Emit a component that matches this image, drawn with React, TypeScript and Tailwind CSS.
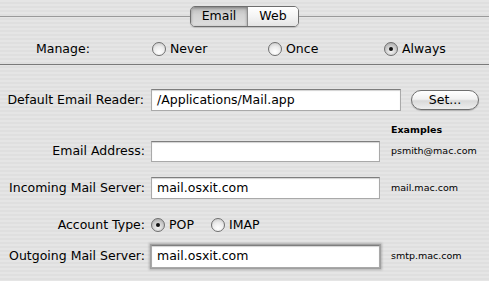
import React from "react";

const font = { fontFamily: '"DejaVu Sans", "Liberation Sans", sans-serif' };

function Radio({ checked }: { checked?: boolean }) {
    return (
        <span
            className={
                "relative inline-block w-[14px] h-[14px] rounded-full border border-[#6f6f6f] shrink-0 " +
                (checked
                    ? "bg-[radial-gradient(circle_at_50%_70%,#f4f4f4_0%,#c9c9c9_55%,#9d9d9d_100%)]"
                    : "bg-[radial-gradient(circle_at_50%_75%,#ffffff_0%,#ececec_50%,#c4c4c4_100%)]")
            }
        >
            {checked && (
                <span className="absolute left-1/2 top-1/2 w-[4px] h-[4px] -ml-[2px] -mt-[2px] rounded-full bg-[#111]" />
            )}
        </span>
    );
}

function Field({ value, width, focused }: { value?: string; width: string; focused?: boolean }) {
    return (
        <div
            className={
                "h-full bg-white border border-[#a9a9a9] border-t-[#7e7e7e] flex items-center pl-[5px] text-[12.5px] text-black " +
                width +
                (focused
                    ? " shadow-[inset_0_1px_1px_rgba(0,0,0,0.18),0_0_0_1px_#a0a0a0,0_0_2px_2px_rgba(120,120,120,0.45)]"
                    : " shadow-[inset_0_1px_1px_rgba(0,0,0,0.18)]")
            }
        >
            {value}
        </div>
    );
}

export default function App() {
    return (
        <div
            style={font}
            className="w-[489px] h-[281px] overflow-hidden text-black bg-[repeating-linear-gradient(180deg,#e5e5e5_0px,#e5e5e5_2px,#dfdfdf_2px,#dfdfdf_4px)]"
        >
            {/* top: tabs + manage */}
            <div className="h-[65px] border-b border-[#7a7a7a]">
                <div className="flex items-center pt-[6px] h-[27px]">
                    <div className="flex-1 h-px bg-[#9a9a9a]" />
                    <div className="flex h-[21px] w-[109px] rounded-[5px] border border-[#6e6e6e] overflow-hidden text-[12.5px] shadow-[0_1px_1px_rgba(0,0,0,0.15)]">
                        <div className="w-[57px] flex items-center justify-center border-r border-[#8a8a8a] bg-[linear-gradient(180deg,#b9b9b9_0%,#d2d2d2_40%,#dedede_100%)] shadow-[inset_0_1px_3px_rgba(0,0,0,0.35)]">
                            Email
                        </div>
                        <div className="flex-1 flex items-center justify-center bg-[linear-gradient(180deg,#ffffff_0%,#f4f4f4_50%,#e4e4e4_100%)]">
                            Web
                        </div>
                    </div>
                    <div className="flex-1 h-px bg-[#9a9a9a]" />
                </div>
                <div className="flex items-center mt-[13px] text-[12.5px]">
                    <div className="w-[152px] pl-[36px]">Manage:</div>
                    <div className="w-[116px] flex items-center gap-[4px]">
                        <Radio />
                        <span>Never</span>
                    </div>
                    <div className="w-[116px] flex items-center gap-[4px]">
                        <Radio />
                        <span>Once</span>
                    </div>
                    <div className="flex items-center gap-[4px]">
                        <Radio checked />
                        <span>Always</span>
                    </div>
                </div>
            </div>

            {/* form */}
            <div className="text-[12.5px]">
                <div className="flex items-center h-[22px] mt-[24px]">
                    <div className="w-[145px] text-right pr-[1px]">Default Email Reader:</div>
                    <div className="ml-[6px] h-full">
                        <Field value="/Applications/Mail.app" width="w-[250px]" />
                    </div>
                    <button className="ml-[10px] w-[68px] h-[20px] rounded-full border border-[#6f6f6f] bg-[linear-gradient(180deg,#ffffff_0%,#f1f1f1_45%,#d9d9d9_55%,#eeeeee_100%)] text-[12.5px] shadow-[0_1px_1px_rgba(0,0,0,0.2)]">
                        Set...
                    </button>
                </div>

                <div className="h-[14px] mt-[12px] flex items-center pl-[391px] text-[9.5px] font-bold">Examples</div>

                <div className="flex items-center h-[21px] mt-[4px]">
                    <div className="w-[145px] text-right">Email Address:</div>
                    <div className="ml-[6px] h-full">
                        <Field width="w-[229px]" />
                    </div>
                    <div className="ml-[11px] text-[9.5px]">psmith@mac.com</div>
                </div>

                <div className="flex items-center h-[22px] mt-[15px]">
                    <div className="w-[145px] text-right">Incoming Mail Server:</div>
                    <div className="ml-[6px] h-full">
                        <Field value="mail.osxit.com" width="w-[229px]" />
                    </div>
                    <div className="ml-[11px] text-[9.5px]">mail.mac.com</div>
                </div>

                <div className="flex items-center h-[16px] mt-[18px]">
                    <div className="w-[145px] text-right">Account Type:</div>
                    <div className="ml-[6px] w-[60px] flex items-center gap-[4px]">
                        <Radio checked />
                        <span>POP</span>
                    </div>
                    <div className="flex items-center gap-[4px]">
                        <Radio />
                        <span>IMAP</span>
                    </div>
                </div>

                <div className="flex items-center h-[23px] mt-[12px]">
                    <div className="w-[145px] text-right">Outgoing Mail Server:</div>
                    <div className="ml-[6px] h-full">
                        <Field value="mail.osxit.com" width="w-[229px]" focused />
                    </div>
                    <div className="ml-[11px] text-[9.5px]">smtp.mac.com</div>
                </div>
            </div>
        </div>
    );
}
